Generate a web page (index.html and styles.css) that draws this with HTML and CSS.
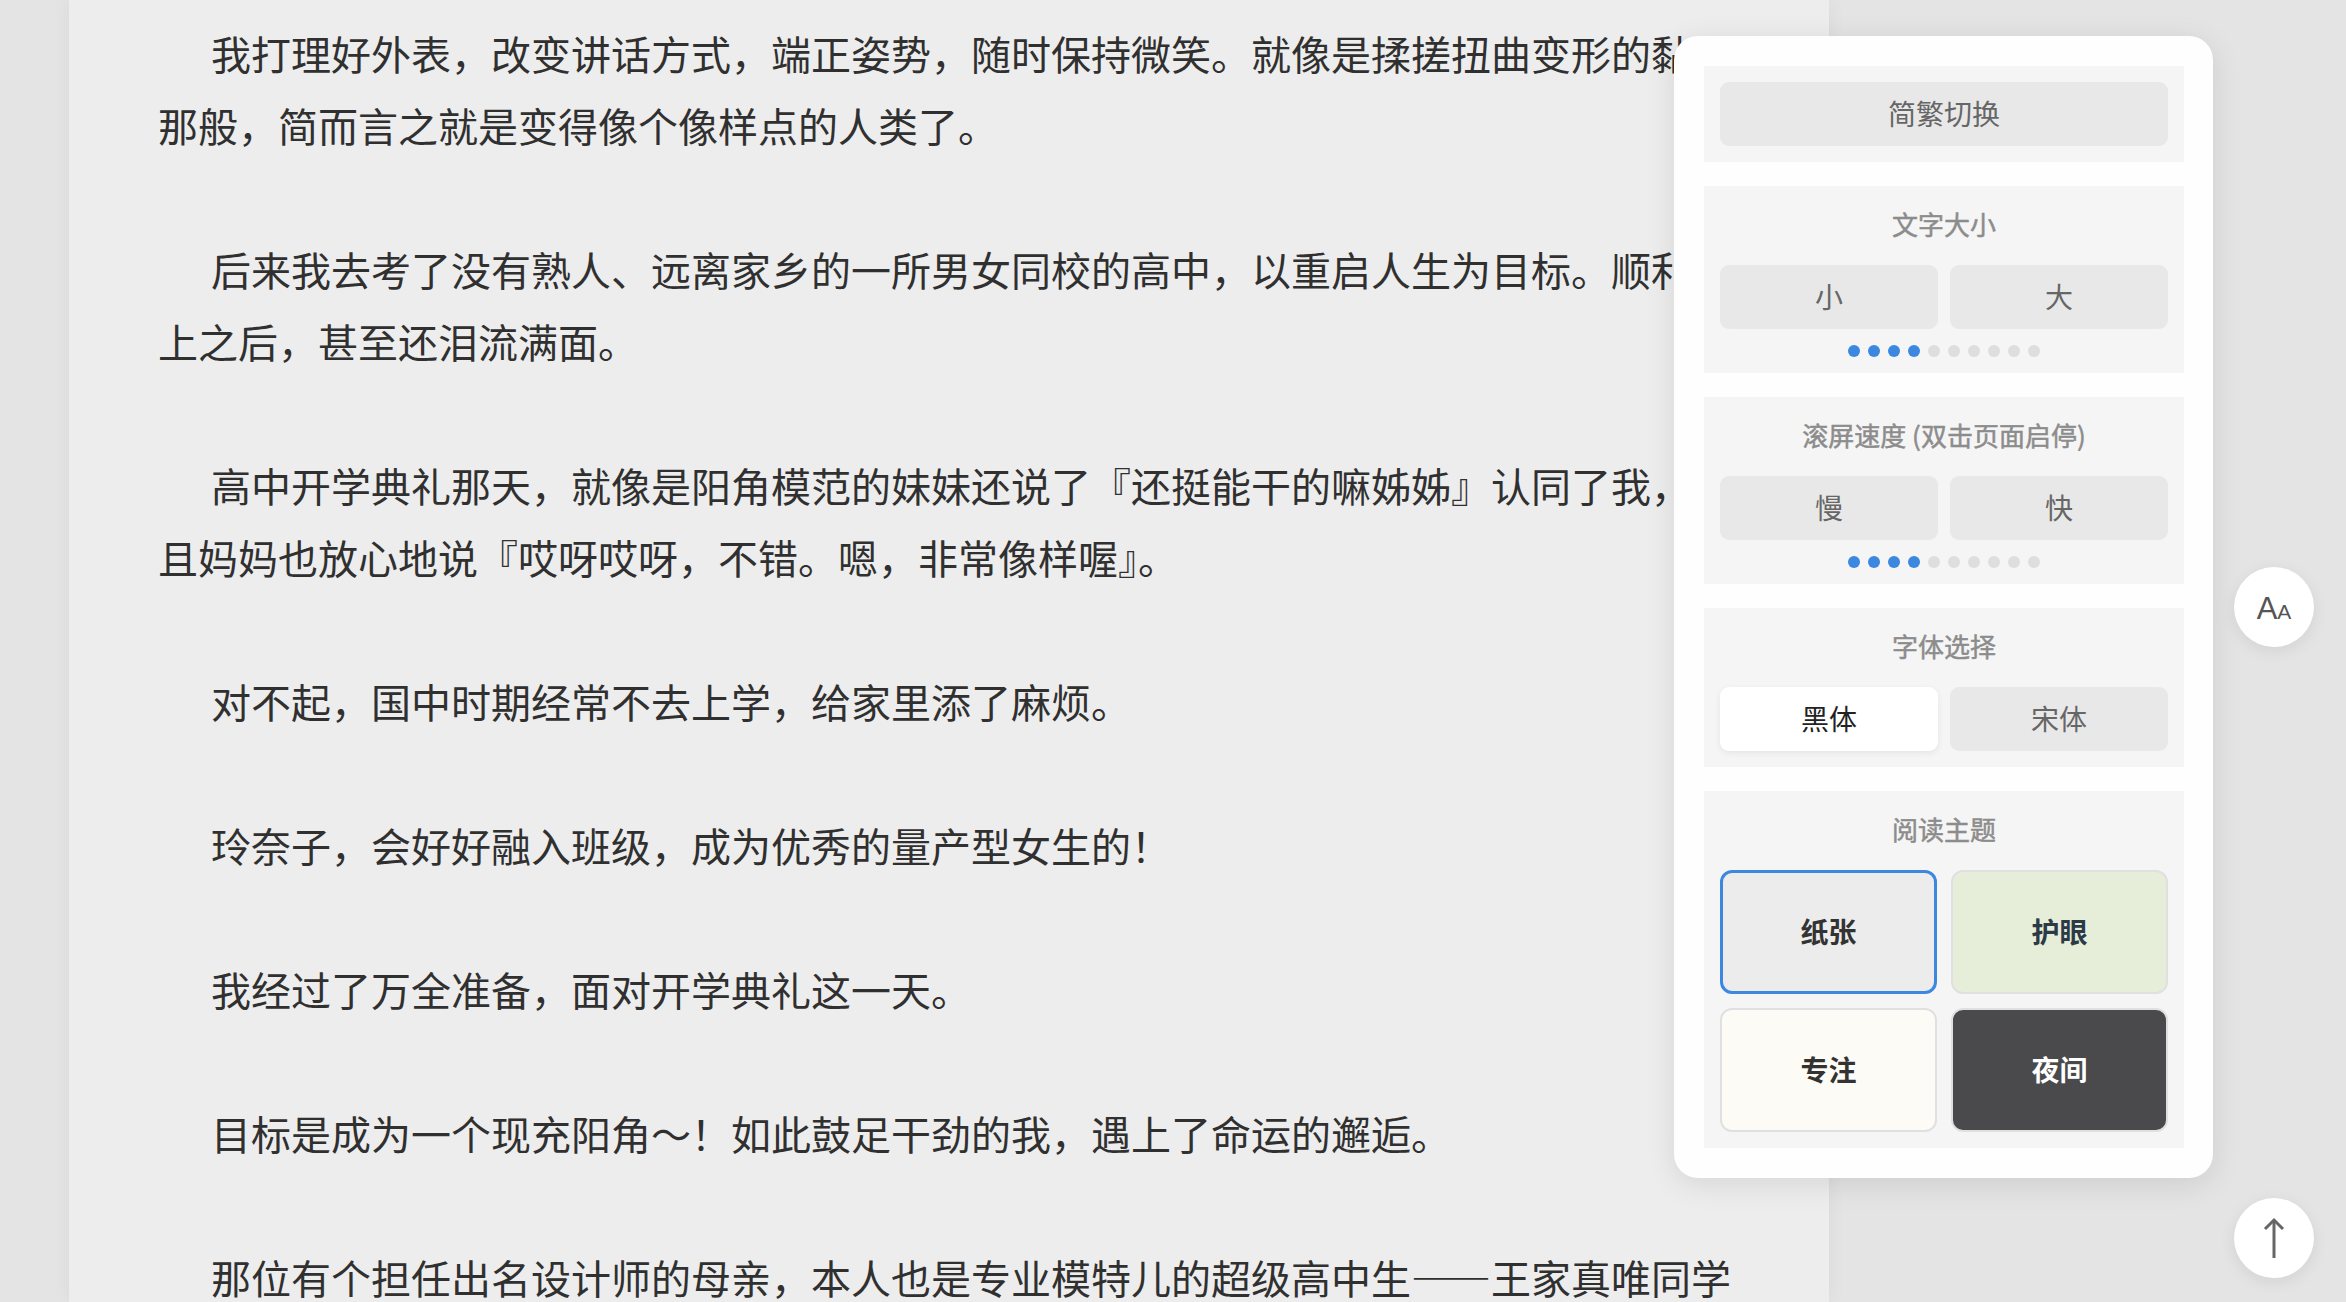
FILE: index.html
```html
<!DOCTYPE html>
<html lang="zh-CN">
<head>
<meta charset="utf-8">
<title>阅读</title>
<link rel="stylesheet" href="styles.css">
</head>
<body>
<main class="reader">
  <article class="chapter">
    <p>我打理好外表，改变讲话方式，端正姿势，随时保持微笑。就像是揉搓扭曲变形的黏土那般，简而言之就是变得像个像样点的人类了。</p>
    <p>后来我去考了没有熟人、远离家乡的一所男女同校的高中，以重启人生为目标。顺利考上之后，甚至还泪流满面。</p>
    <p>高中开学典礼那天，就像是阳角模范的妹妹还说了『还挺能干的嘛姊姊』认同了我，而且妈妈也放心地说『哎呀哎呀，不错。嗯，非常像样喔』。</p>
    <p>对不起，国中时期经常不去上学，给家里添了麻烦。</p>
    <p>玲奈子，会好好融入班级，成为优秀的量产型女生的！</p>
    <p>我经过了万全准备，面对开学典礼这一天。</p>
    <p>目标是成为一个现充阳角～！如此鼓足干劲的我，遇上了命运的邂逅。</p>
    <p>那位有个担任出名设计师的母亲，本人也是专业模特儿的超级高中生——王家真唯同学出现在了我的面前。</p>
  </article>
</main>

<aside class="settings">
  <section class="group group-single">
    <button class="btn">简繁切换</button>
  </section>

  <section class="group">
    <div class="group-title">文字大小</div>
    <div class="pair">
      <button class="btn">小</button>
      <button class="btn">大</button>
    </div>
    <div class="dots">
      <span class="dot on"></span><span class="dot on"></span><span class="dot on"></span><span class="dot on"></span><span class="dot"></span><span class="dot"></span><span class="dot"></span><span class="dot"></span><span class="dot"></span><span class="dot"></span>
    </div>
  </section>

  <section class="group">
    <div class="group-title">滚屏速度 (双击页面启停)</div>
    <div class="pair">
      <button class="btn">慢</button>
      <button class="btn">快</button>
    </div>
    <div class="dots">
      <span class="dot on"></span><span class="dot on"></span><span class="dot on"></span><span class="dot on"></span><span class="dot"></span><span class="dot"></span><span class="dot"></span><span class="dot"></span><span class="dot"></span><span class="dot"></span>
    </div>
  </section>

  <section class="group">
    <div class="group-title">字体选择</div>
    <div class="pair">
      <button class="btn btn-active">黑体</button>
      <button class="btn">宋体</button>
    </div>
  </section>

  <section class="group">
    <div class="group-title">阅读主题</div>
    <div class="themes">
      <button class="theme theme-paper selected">纸张</button>
      <button class="theme theme-eye">护眼</button>
      <button class="theme theme-focus">专注</button>
      <button class="theme theme-night">夜间</button>
    </div>
  </section>
</aside>

<button class="fab fab-font" aria-label="字体设置"><span class="aa"><span class="big">A</span><span class="small">A</span></span></button>
<button class="fab fab-top" aria-label="回到顶部">
  <svg width="24" height="44" viewBox="0 0 24 44" fill="none" stroke="#666" stroke-width="3" stroke-linecap="butt" stroke-linejoin="miter">
    <path d="M12 4 V42"/>
    <path d="M3 13 L12 4 L21 13"/>
  </svg>
</button>
</body>
</html>
```

FILE: styles.css
```css
html, body {
  margin: 0;
  padding: 0;
}

body {
  width: 2346px;
  height: 1302px;
  overflow: hidden;
  background: #e4e4e4;
  font-family: "Noto Sans CJK SC", "Noto Sans", sans-serif;
  position: relative;
}

.reader {
  margin-left: 69px;
  width: 1760px;
  height: 1302px;
  background: #ededed;
  box-shadow: 0 0 18px rgba(0, 0, 0, 0.05);
  overflow: hidden;
}

.chapter {
  padding: 17px 65px 0 89px;
}

.chapter p {
  margin: 0 0 72px;
  font-size: 40px;
  line-height: 72px;
  color: #303030;
  text-indent: 53px;
}

/* settings panel */
.settings {
  position: absolute;
  left: 1674px;
  top: 36px;
  width: 539px;
  box-sizing: border-box;
  padding: 30px 29px 30px 30px;
  background: #fefefe;
  border-radius: 24px;
  box-shadow: 0 6px 30px rgba(0, 0, 0, 0.10);
  display: flex;
  flex-direction: column;
  gap: 24px;
}

.group {
  background: #f5f5f5;
  padding: 16px;
  display: flex;
  flex-direction: column;
}

.group-title {
  height: 44px;
  line-height: 44px;
  text-align: center;
  font-size: 26px;
  font-weight: 400;
  color: #8c8c8c;
  -webkit-text-stroke: 0.5px #8c8c8c;
  margin-bottom: 19px;
}

.btn {
  display: block;
  width: 100%;
  height: 64px;
  border: none;
  border-radius: 9px;
  background: #e8e8e8;
  color: #666;
  font-family: inherit;
  font-size: 28px;
  padding: 0 0 3px;
}

.pair {
  display: grid;
  grid-template-columns: 1fr 1fr;
  gap: 12px;
}

.btn-active {
  background: #ffffff;
  color: #222;
  box-shadow: 0 2px 6px rgba(0, 0, 0, 0.07);
}

.dots {
  display: flex;
  justify-content: center;
  gap: 8px;
  margin-top: 16px;
}

.dot {
  width: 12px;
  height: 12px;
  border-radius: 50%;
  background: #dedede;
}

.dot.on {
  background: #3c87e0;
}

.themes {
  display: grid;
  grid-template-columns: 1fr 1fr;
  grid-auto-rows: 124px;
  gap: 14px;
}

.theme {
  border: 2px solid #e0e0e0;
  border-radius: 12px;
  font-family: inherit;
  font-size: 28px;
  font-weight: 700;
  padding: 0 0 3px;
}

.theme-paper {
  background: #ececec;
  color: #333;
}

.theme-paper.selected {
  border: 3px solid #3c87e0;
}

.theme-eye {
  background: #e6eed9;
  color: #2c3a48;
}

.theme-focus {
  background: #fdfbf5;
  color: #333;
}

.theme-night {
  background: #4a4a4c;
  color: #ffffff;
}

/* floating buttons */
.fab {
  position: absolute;
  left: 2234px;
  width: 80px;
  height: 80px;
  border-radius: 50%;
  border: none;
  background: #ffffff;
  box-shadow: 0 4px 16px rgba(0, 0, 0, 0.08);
  display: flex;
  align-items: center;
  justify-content: center;
  padding: 0;
}

.fab-font {
  top: 567px;
}

.aa {
  display: flex;
  align-items: baseline;
  font-family: "Liberation Sans", Arial, sans-serif;
  color: #555;
  line-height: 1;
  margin-top: 2px;
}

.aa .big {
  font-size: 31px;
}

.aa .small {
  font-size: 21px;
}

.fab-top {
  top: 1198px;
}
```
